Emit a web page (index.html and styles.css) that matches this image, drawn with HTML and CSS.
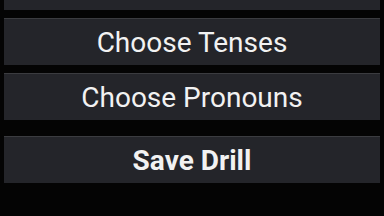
FILE: index.html
```html
<!DOCTYPE html>
<html lang="en">
<head>
    <meta charset="UTF-8">
    <meta name="viewport" content="width=device-width, initial-scale=1.0">
    <title>Drill Setup</title>
    <link rel="stylesheet" href="styles.css">
</head>
<body>
    <div id="menu">
        <button class="menu-button"></button>
        <button class="menu-button">Choose Tenses</button>
        <button class="menu-button">Choose Pronouns</button>
        <button class="menu-button save-button">Save Drill</button>
    </div>
</body>
</html>
```

FILE: styles.css
```css
* {
    outline: none;
    box-sizing: border-box;
}

html, body {
    margin: 0;
    height: 100%;
    overflow: hidden;
    background-color: #040404;
}

#menu {
    display: flex;
    flex-direction: column;
    gap: 8px;
    margin-top: -37px;
    padding: 0 4px;
}

.menu-button {
    height: 47px;
    border: none;
    border-top: 1px solid #3b3c40;
    background-color: #24252a;
    color: #f2f2f2;
    font-family: Roboto, "Liberation Sans", sans-serif;
    font-size: 28px;
    padding: 0;
}

.save-button {
    margin-top: 8px;
    font-weight: bold;
}
```
